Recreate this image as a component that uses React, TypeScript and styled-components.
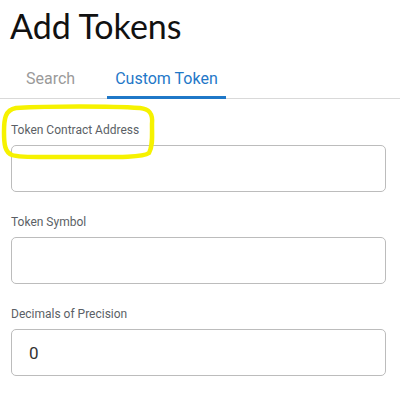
import React from 'react';
import styled, { createGlobalStyle } from 'styled-components';

const GlobalStyle = createGlobalStyle`
  html, body {
    margin: 0;
    padding: 0;
    background: #ffffff;
  }
  * {
    box-sizing: border-box;
  }
`;

const fields = [
  { label: 'Token Contract Address', value: '' },
  { label: 'Token Symbol', value: '' },
  { label: 'Decimals of Precision', value: '0' },
];

const App: React.FC = () => {
  return (
    <>
      <GlobalStyle />
      <Page>
        <Title>Add Tokens</Title>
        <TabBar>
          <Tab>Search</Tab>
          <Tab active>Custom Token</Tab>
        </TabBar>
        <Form>
          {fields.map((field) => (
            <Field key={field.label}>
              <Label>{field.label}</Label>
              <Input type="text" defaultValue={field.value} />
            </Field>
          ))}
        </Form>
        <Highlight width="156" height="58" viewBox="0 0 156 58">
          <path
            d="M16 5 C50 3 110 3 140 5 C150 6 153 11 152 21 C152 33 153 43 149 50 C142 55 110 54 70 54 C40 54 20 55 12 52 C5 49 4 42 4 29 C4 16 5 7 16 5 Z"
            fill="none"
            stroke="#f6f200"
            strokeWidth="4.5"
          />
        </Highlight>
      </Page>
    </>
  );
};

const Page = styled.div`
  position: relative;
  width: 400px;
  height: 407px;
  background: #fff;
  overflow: hidden;
`;

const Title = styled.h1`
  margin: 0;
  padding: 6px 0 0 10px;
  font-family: 'Lato', 'Noto Sans', sans-serif;
  font-weight: 400;
  font-size: 34px;
  line-height: 40px;
  color: #111;
`;

const TabBar = styled.div`
  display: flex;
  gap: 24px;
  margin-top: 23px;
  padding-left: 18px;
  border-bottom: 1px solid #d9d9d9;
`;

const Tab = styled.div<{ active?: boolean }>`
  padding: 0 8px 8px;
  font-family: 'Roboto', sans-serif;
  font-size: 16px;
  line-height: 19px;
  color: ${(props) => (props.active ? '#1f78c8' : '#9a9a9a')};
  border-bottom: 3px solid
    ${(props) => (props.active ? '#1f78c8' : 'transparent')};
  margin-bottom: -1px;
`;

const Form = styled.div`
  display: flex;
  flex-direction: column;
  gap: 23px;
  padding: 24px 14px 0 11px;
`;

const Field = styled.div`
  display: flex;
  flex-direction: column;
  gap: 8px;
`;

const Label = styled.label`
  font-family: 'Roboto', sans-serif;
  font-size: 12px;
  line-height: 14px;
  color: #5b5f66;
`;

const Input = styled.input`
  width: 100%;
  height: 47px;
  padding: 0 17px;
  border: 1.5px solid #bcbcbc;
  border-radius: 5px;
  font-family: 'Roboto', sans-serif;
  font-size: 17px;
  color: #333;
  background: #fff;
  outline: none;
`;

const Highlight = styled.svg`
  position: absolute;
  left: 0;
  top: 103px;
  pointer-events: none;
`;

export default App;
